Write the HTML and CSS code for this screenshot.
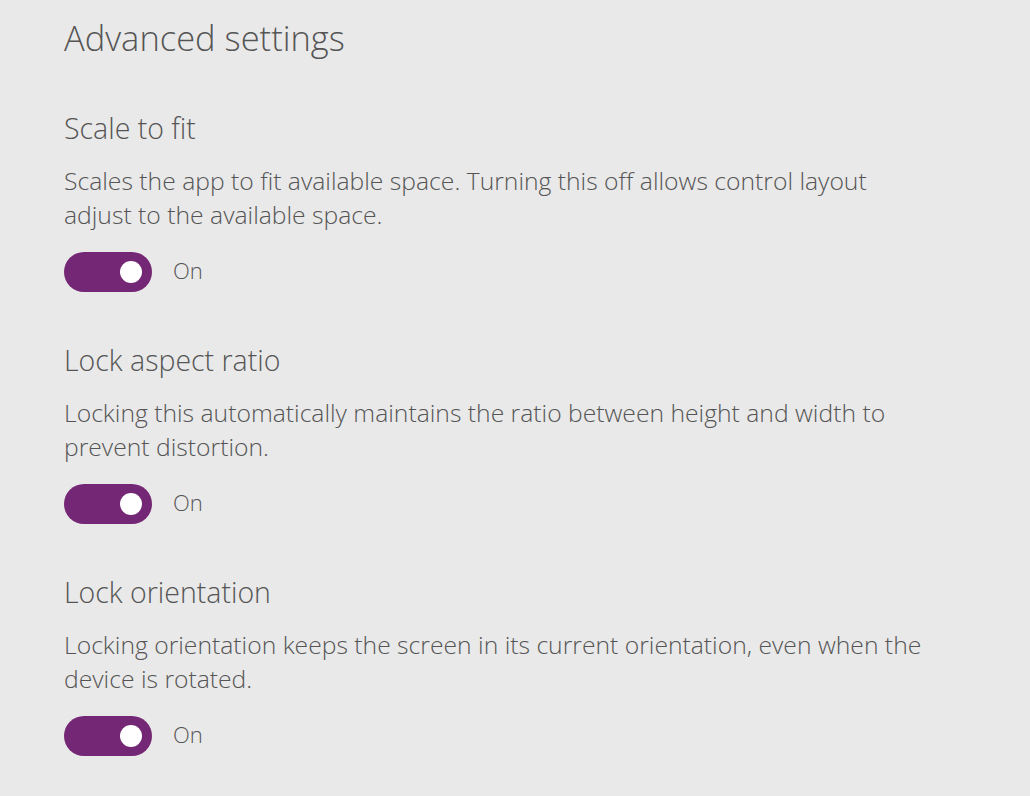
FILE: index.html
```html
<!DOCTYPE html>
<html>
<head>
<meta charset="utf-8">
<link rel="stylesheet" href="styles.css">
</head>
<body>
<main class="page">
  <h1 class="title">Advanced settings</h1>
  <section class="setting">
    <h2 class="setting-name">Scale to fit</h2>
    <p class="setting-desc">Scales the app to fit available space. Turning this off allows control layout adjust to the available space.</p>
    <div class="toggle-row"><span class="toggle"><span class="knob"></span></span><span class="toggle-label">On</span></div>
  </section>
  <section class="setting">
    <h2 class="setting-name">Lock aspect ratio</h2>
    <p class="setting-desc">Locking this automatically maintains the ratio between height and width to prevent distortion.</p>
    <div class="toggle-row"><span class="toggle"><span class="knob"></span></span><span class="toggle-label">On</span></div>
  </section>
  <section class="setting">
    <h2 class="setting-name">Lock orientation</h2>
    <p class="setting-desc">Locking orientation keeps the screen in its current orientation, even when the device is rotated.</p>
    <div class="toggle-row"><span class="toggle"><span class="knob"></span></span><span class="toggle-label">On</span></div>
  </section>
</main>
</body>
</html>
```
FILE: styles.css
```css
html, body {
  margin: 0;
  padding: 0;
  background: #e9e9e9;
}
body {
  font-family: "Open Sans", "Noto Sans", sans-serif;
  font-weight: 300;
  color: #555555;
}
.page {
  padding: 15px 0 0 64px;
  width: 870px;
}
.title {
  margin: 0;
  font-size: 34.5px;
  line-height: 46px;
  font-weight: 300;
  color: #555555;
}
.setting {
  display: flex;
  flex-direction: column;
  margin-top: 49px;
}
.setting + .setting {
  margin-top: 50px;
}
.setting-name {
  margin: 0;
  font-size: 28.5px;
  line-height: 36px;
  font-weight: 300;
  color: #555555;
}
.setting-desc {
  margin: 18px 0 0 0;
  font-size: 24.7px;
  line-height: 34px;
  font-weight: 300;
  color: #555555;
}
.toggle-row {
  margin-top: 20px;
  display: flex;
  align-items: center;
  gap: 21px;
}
.toggle {
  width: 88px;
  height: 40px;
  border-radius: 20px;
  background: #742774;
  display: flex;
  align-items: center;
  justify-content: flex-end;
  padding-right: 10px;
  box-sizing: border-box;
}
.knob {
  width: 22px;
  height: 22px;
  border-radius: 50%;
  background: #ffffff;
}
.toggle-label {
  font-size: 22px;
  line-height: 30px;
  font-weight: 300;
  margin-top: -4px;
}
```
